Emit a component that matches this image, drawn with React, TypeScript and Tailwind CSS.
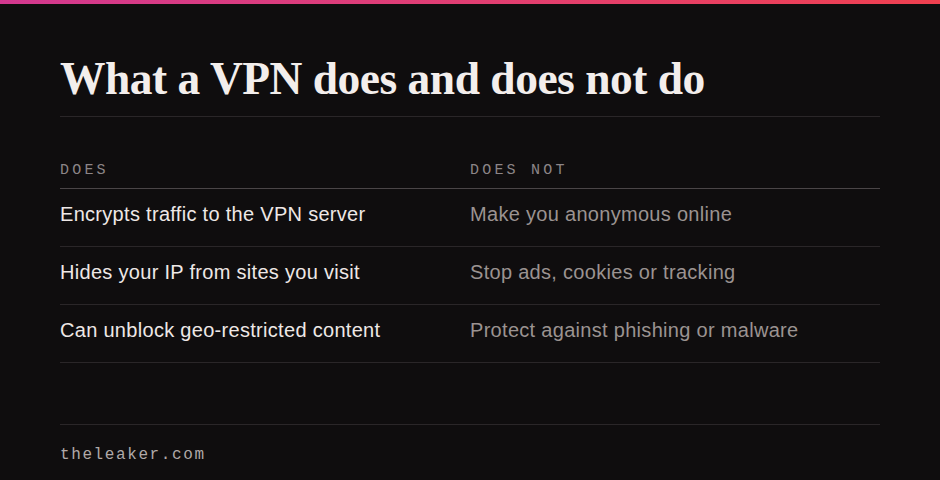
const rows = [
  ['Encrypts traffic to the VPN server', 'Make you anonymous online'],
  ['Hides your IP from sites you visit', 'Stop ads, cookies or tracking'],
  ['Can unblock geo-restricted content', 'Protect against phishing or malware'],
];

export default function App() {
  return (
    <div className="w-[940px] h-[480px] bg-[#0f0d0e] flex flex-col overflow-hidden">
      <div className="h-[4px] bg-gradient-to-r from-[#d3388f] to-[#f0404f]" />
      <div className="flex-1 flex flex-col px-[60px]">
        <h1 className="mt-[50px] text-[45.5px] leading-[50px] font-bold text-[#f3eeec] font-['Liberation_Serif',serif] tracking-[-0.5px]">
          What a VPN does and does not do
        </h1>
        <div className="mt-[12px] h-px bg-[#2a2628]" />

        <div className="mt-[43px] grid grid-cols-[410px_1fr] font-['Liberation_Mono',monospace] text-[15px] tracking-[3.2px] text-[#8c8587] pb-[5px] border-b border-[#4a4547]">
          <div>DOES</div>
          <div>DOES NOT</div>
        </div>

        {rows.map(([yes, no]) => (
          <div
            key={yes}
            className="grid grid-cols-[410px_1fr] h-[58px] items-center border-b border-[#2a2628] font-['Liberation_Sans',sans-serif] text-[20px] tracking-[0.3px] pb-[6px]"
          >
            <div className="text-[#eee8e6]">{yes}</div>
            <div className="text-[#9b9391]">{no}</div>
          </div>
        ))}

        <div className="mt-[61px] h-px bg-[#2a2628]" />
        <div className="mt-[18px] font-['Liberation_Mono',monospace] text-[16px] tracking-[1.6px] text-[#b0a9a8]">
          theleaker.com
        </div>
      </div>
    </div>
  );
}
